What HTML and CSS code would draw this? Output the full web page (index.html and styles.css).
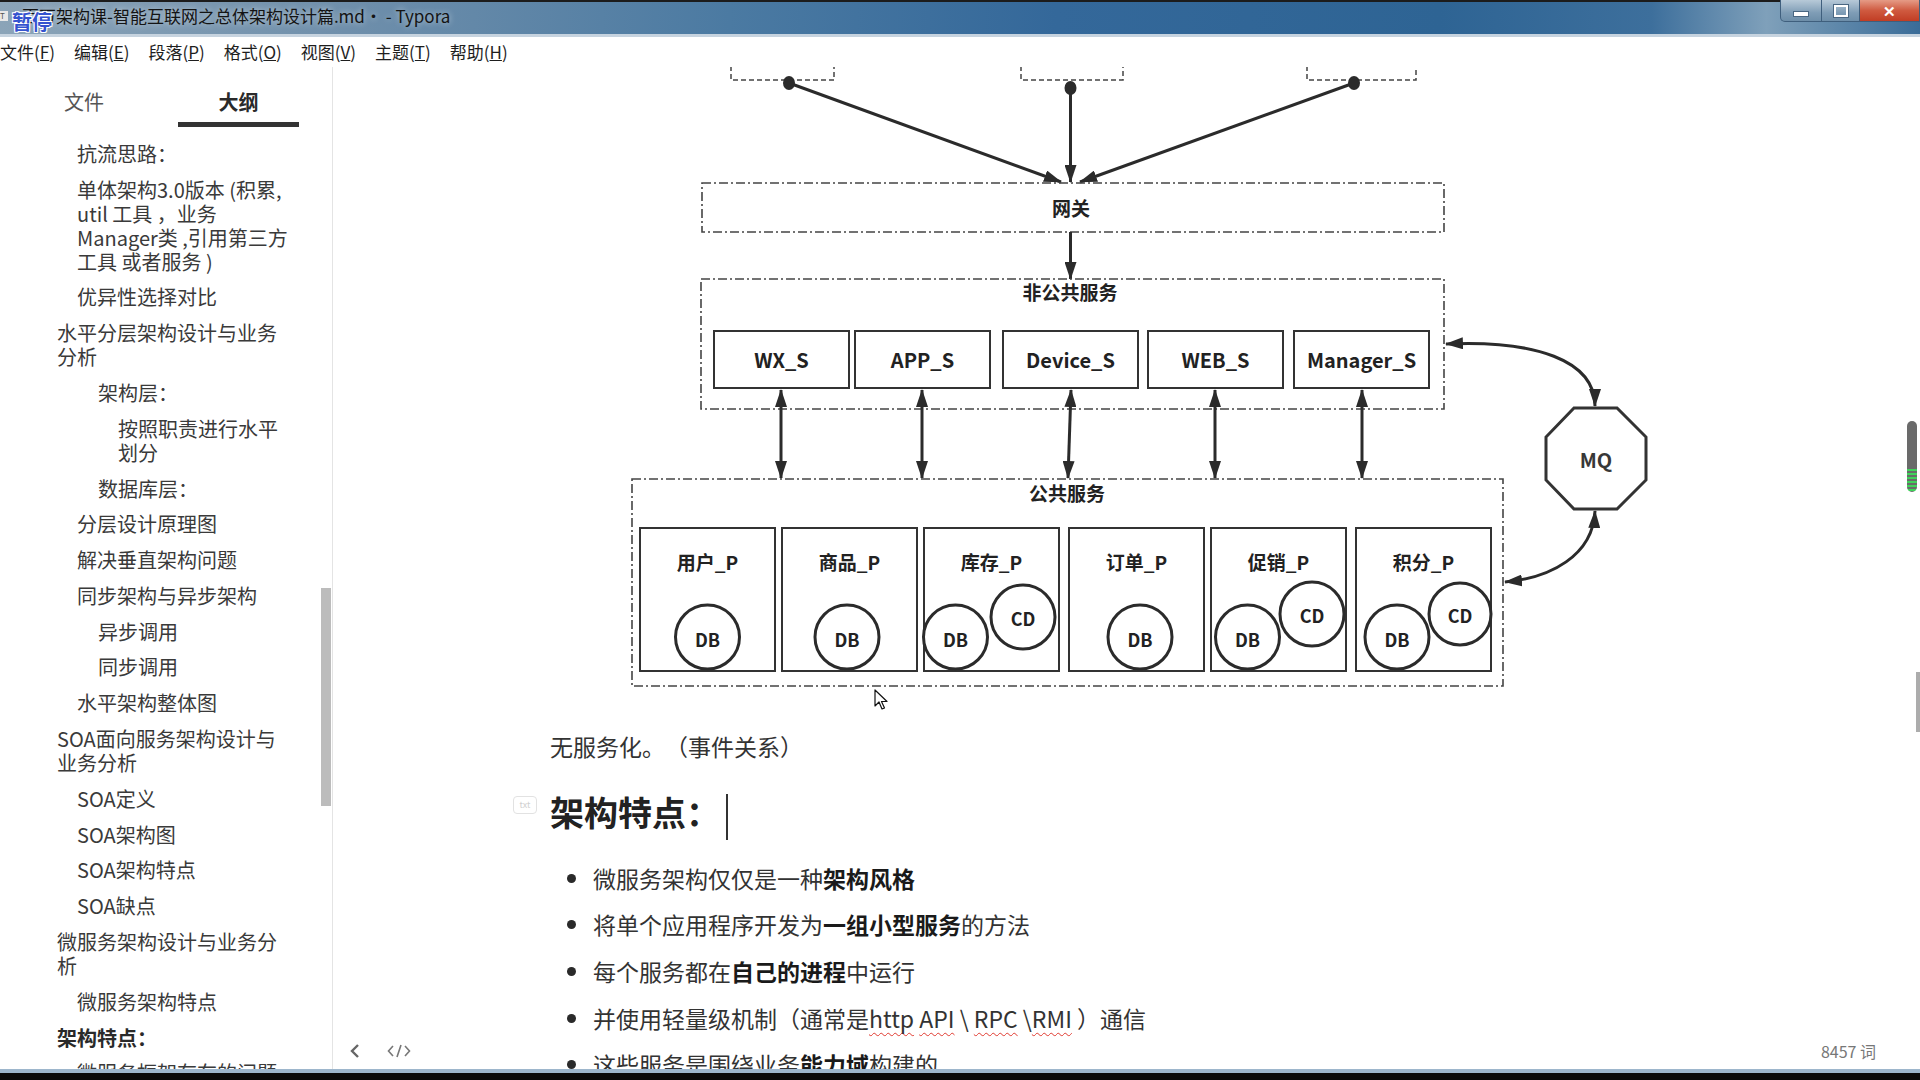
FILE: index.html
```html
<!DOCTYPE html>
<html lang="zh-CN">
<head>
  <meta charset="UTF-8">
  <meta name="viewport" content="width=device-width, initial-scale=1.0">
  <title>Typora</title>
  <link rel="stylesheet" href="styles.css">
</head>
<body>
<div class="window">
  <div class="titlebar">
    <span class="app-icon">T</span>
    <span class="title">百万架构课-智能互联网之总体架构设计篇.md• - Typora</span>
    <span class="paused">暂停</span>
    <div class="win-btns">
      <span class="wb min"><i></i></span>
      <span class="wb max"><i></i></span>
      <span class="wb close">✕</span>
    </div>
  </div>

  <div class="menubar">
    <span>文件(<u>F</u>)</span>
    <span>编辑(<u>E</u>)</span>
    <span>段落(<u>P</u>)</span>
    <span>格式(<u>O</u>)</span>
    <span>视图(<u>V</u>)</span>
    <span>主题(<u>T</u>)</span>
    <span>帮助(<u>H</u>)</span>
  </div>

  <div class="main">
    <aside class="sidebar">
      <div class="tabs">
        <div class="tab files">文件</div>
        <div class="tab active">大纲</div>
      </div>
      <div class="outline">
        <div class="o-item lv2">抗流思路：</div>
        <div class="o-item lv2">单体架构3.0版本 (积累,<br>util 工具 ，业务<br>Manager类 ,引用第三方<br>工具 或者服务 )</div>
        <div class="o-item lv2">优异性选择对比</div>
        <div class="o-item lv1">水平分层架构设计与业务<br>分析</div>
        <div class="o-item lv3">架构层：</div>
        <div class="o-item lv4">按照职责进行水平<br>划分</div>
        <div class="o-item lv3">数据库层：</div>
        <div class="o-item lv2">分层设计原理图</div>
        <div class="o-item lv2">解决垂直架构问题</div>
        <div class="o-item lv2">同步架构与异步架构</div>
        <div class="o-item lv3">异步调用</div>
        <div class="o-item lv3">同步调用</div>
        <div class="o-item lv2">水平架构整体图</div>
        <div class="o-item lv1">SOA面向服务架构设计与<br>业务分析</div>
        <div class="o-item lv2">SOA定义</div>
        <div class="o-item lv2">SOA架构图</div>
        <div class="o-item lv2">SOA架构特点</div>
        <div class="o-item lv2">SOA缺点</div>
        <div class="o-item lv1">微服务架构设计与业务分<br>析</div>
        <div class="o-item lv2">微服务架构特点</div>
        <div class="o-item lv1 current">架构特点：</div>
        <div class="o-item lv2">微服务框架存在的问题</div>
      </div>
      <div class="side-scroll"></div>
    </aside>

    <section class="editor">
      <div class="doc">
        <svg class="diagram" viewBox="550 67 1120 625" width="1120" height="625">
          <defs>
            <marker id="ah" viewBox="0 0 18 12" refX="17" refY="6" markerWidth="18" markerHeight="12" markerUnits="userSpaceOnUse" orient="auto-start-reverse">
              <path d="M0,0 L18,6 L0,12 z" fill="#2b2b2b"/>
            </marker>
          </defs>

          <!-- clients -->
          <path class="dash" d="M731,58 V80 H834 V58"/>
          <path class="dash" d="M1021,58 V80 H1123 V58"/>
          <path class="dash" d="M1307,58 V80 H1416 V58"/>
          <line class="arrow" x1="789" y1="83" x2="1061" y2="182" marker-end="url(#ah)"/>
          <line class="arrow" x1="1070.5" y1="88" x2="1070.5" y2="182" marker-end="url(#ah)"/>
          <line class="arrow" x1="1354" y1="83" x2="1080" y2="182" marker-end="url(#ah)"/>
          <ellipse class="dot" cx="789" cy="83" rx="6" ry="7"/>
          <ellipse class="dot" cx="1070.5" cy="88" rx="6" ry="7"/>
          <ellipse class="dot" cx="1354" cy="83" rx="6" ry="7"/>

          <!-- gateway -->
          <rect class="zone" x="702" y="183" width="742" height="49"/>
          <text class="lbl" x="1071" y="207">网关</text>
          <line class="arrow" x1="1070.5" y1="232" x2="1070.5" y2="279" marker-end="url(#ah)"/>

          <!-- private services -->
          <rect class="zone" x="701" y="279" width="743" height="130"/>
          <text class="lbl" x="1070" y="291">非公共服务</text>
          <rect class="box" x="714" y="331" width="135" height="57"/>
          <rect class="box" x="855" y="331" width="135" height="57"/>
          <rect class="box" x="1003" y="331" width="135" height="57"/>
          <rect class="box" x="1148" y="331" width="135" height="57"/>
          <rect class="box" x="1294" y="331" width="135" height="57"/>
          <text class="lbl big" x="781.5" y="359">WX_S</text>
          <text class="lbl big" x="922.5" y="359">APP_S</text>
          <text class="lbl big" x="1070.5" y="359">Device_S</text>
          <text class="lbl big" x="1215.5" y="359">WEB_S</text>
          <text class="lbl big" x="1361.5" y="359">Manager_S</text>

          <line class="arrow" x1="781" y1="390" x2="781" y2="478" marker-start="url(#ah)" marker-end="url(#ah)"/>
          <line class="arrow" x1="922" y1="390" x2="922" y2="478" marker-start="url(#ah)" marker-end="url(#ah)"/>
          <line class="arrow" x1="1071" y1="390" x2="1068" y2="478" marker-start="url(#ah)" marker-end="url(#ah)"/>
          <line class="arrow" x1="1215" y1="390" x2="1215" y2="478" marker-start="url(#ah)" marker-end="url(#ah)"/>
          <line class="arrow" x1="1362" y1="390" x2="1362" y2="478" marker-start="url(#ah)" marker-end="url(#ah)"/>

          <!-- public services -->
          <rect class="zone" x="632" y="479" width="871" height="207"/>
          <text class="lbl" x="1067" y="492">公共服务</text>
          <rect class="box" x="640" y="528" width="135" height="143"/>
          <rect class="box" x="782" y="528" width="135" height="143"/>
          <rect class="box" x="924" y="528" width="135" height="143"/>
          <rect class="box" x="1069" y="528" width="135" height="143"/>
          <rect class="box" x="1211" y="528" width="135" height="143"/>
          <rect class="box" x="1356" y="528" width="135" height="143"/>
          <text class="lbl" x="707.5" y="561">用户_P</text>
          <text class="lbl" x="849.5" y="561">商品_P</text>
          <text class="lbl" x="991.5" y="561">库存_P</text>
          <text class="lbl" x="1136.5" y="561">订单_P</text>
          <text class="lbl" x="1278.5" y="561">促销_P</text>
          <text class="lbl" x="1423.5" y="561">积分_P</text>

          <circle class="store" cx="707.5" cy="637" r="32"/>
          <text class="lbl db" x="707.5" y="639">DB</text>
          <circle class="store" cx="847" cy="637" r="32"/>
          <text class="lbl db" x="847" y="639">DB</text>
          <circle class="store" cx="955.5" cy="637" r="32"/>
          <text class="lbl db" x="955.5" y="639">DB</text>
          <circle class="store" cx="1023" cy="617" r="32"/>
          <text class="lbl db" x="1023" y="618">CD</text>
          <circle class="store" cx="1140" cy="637" r="32"/>
          <text class="lbl db" x="1140" y="639">DB</text>
          <circle class="store" cx="1247.5" cy="637" r="32"/>
          <text class="lbl db" x="1247.5" y="639">DB</text>
          <circle class="store" cx="1312" cy="614" r="32"/>
          <text class="lbl db" x="1312" y="615">CD</text>
          <circle class="store" cx="1397" cy="637" r="32"/>
          <text class="lbl db" x="1397" y="639">DB</text>
          <circle class="store" cx="1460" cy="614" r="31"/>
          <text class="lbl db" x="1460" y="615">CD</text>

          <!-- message queue -->
          <polygon class="box thick" points="1574,408 1617,408 1646,437 1646,480 1617,509 1574,509 1546,480 1546,437"/>
          <text class="lbl mq" x="1596" y="459">MQ</text>
          <path class="arrow" d="M1446,344 C1535,340 1595,360 1595,406" marker-start="url(#ah)" marker-end="url(#ah)"/>
          <path class="arrow" d="M1595,511 C1593,556 1550,578 1505,582" marker-start="url(#ah)" marker-end="url(#ah)"/>
        </svg>

        <p class="note">无服务化。（事件关系）</p>

        <h2><span class="h-mark">txt</span>架构特点：<span class="caret"></span></h2>

        <ul class="points">
          <li>微服务架构仅仅是一种<strong>架构风格</strong></li>
          <li>将单个应用程序开发为<strong>一组小型服务</strong>的方法</li>
          <li>每个服务都在<strong>自己的进程</strong>中运行</li>
          <li>并使用轻量级机制（通常是<span class="typo">http</span> <span class="typo">API</span> \ <span class="typo">RPC</span> \<span class="typo">RMI</span> ）通信</li>
          <li>这些服务是围绕业务<strong>能力域</strong>构建的</li>
        </ul>
      </div>

      <svg class="pointer" width="14" height="22" viewBox="0 0 14 22">
        <path d="M1,1 L1,17 L5,13 L8,20 L10.5,19 L7.5,12.5 L13,12.5 Z" fill="#fff" stroke="#111" stroke-width="1.2" stroke-linejoin="round"/>
      </svg>

      <div class="volume"></div>
      <div class="edit-scroll"></div>

      <div class="footer">
        <svg class="f-icon" width="12" height="16" viewBox="0 0 12 16">
          <path d="M9,2 L3,8 L9,14" fill="none" stroke="#666" stroke-width="2.4"/>
        </svg>
        <svg class="f-icon code" width="24" height="16" viewBox="0 0 24 16">
          <path d="M6,3 L1.5,8 L6,13 M18,3 L22.5,8 L18,13 M14,2 L10,14" fill="none" stroke="#777" stroke-width="1.6"/>
        </svg>
        <span class="words">8457 词</span>
      </div>
    </section>
  </div>

  <div class="taskbar"></div>
</div>
</body>
</html>
```

FILE: styles.css
```css
body {
  margin: 0;
  width: 1920px;
  height: 1080px;
  overflow: hidden;
  background: #000;
  font-family: "Noto Sans CJK SC", "Noto Sans", sans-serif;
  text-spacing-trim: space-all;
}
.window {
  height: 1080px;
  display: flex;
  flex-direction: column;
  background: #fff;
}

/* title bar */
.titlebar {
  flex: none;
  height: 37px;
  box-sizing: border-box;
  border-top: 2px solid #1c1c1c;
  border-bottom: 3px solid #c6d3df;
  display: flex;
  align-items: center;
  position: relative;
  background: linear-gradient(90deg, #8ba4b8 0%, #6f8fab 18%, #4b7aa2 38%, #34689a 55%, #2e6494 75%, #3d6f9c 86%, #7fa0ba 92%, #5c86a9 96%, #3a6c98 100%);
}
.app-icon {
  position: absolute;
  left: 0;
  top: 9px;
  width: 8px;
  height: 10px;
  font-size: 8px;
  line-height: 10px;
  color: #555;
  background: #e8e8e8;
}
.title {
  margin-left: 22px;
  margin-top: -4px;
  font-size: 17px;
  line-height: 24px;
  color: #141414;
  text-shadow: 0 0 6px rgba(255, 255, 255, 0.6);
  white-space: nowrap;
}
.paused {
  position: absolute;
  left: 12px;
  top: 7px;
  font-size: 20px;
  line-height: 26px;
  font-weight: bold;
  color: #3453cf;
  text-shadow: -1px -1px 0 #fff, 1px -1px 0 #fff, -1px 1px 0 #fff, 1px 1px 0 #fff;
}
.win-btns {
  margin-left: auto;
  align-self: flex-start;
  margin-top: -2px;
  display: flex;
}
.wb {
  height: 22px;
  box-sizing: border-box;
  border: 1px solid #3f5f7d;
  border-top: none;
  display: flex;
  align-items: center;
  justify-content: center;
  background: linear-gradient(#b7c9d8, #7f9db6 60%, #6d8ea9);
}
.wb.min {
  width: 42px;
  border-bottom-left-radius: 5px;
}
.wb.min i {
  width: 14px;
  height: 4px;
  margin-top: 6px;
  background: #fff;
  border: 1px solid #4a6782;
}
.wb.max {
  width: 38px;
  border-left: none;
}
.wb.max i {
  width: 10px;
  height: 8px;
  border: 2px solid #fff;
  outline: 1px solid #4a6782;
}
.wb.close {
  width: 60px;
  border-left: none;
  color: #fff;
  font-size: 15px;
  font-weight: bold;
  background: linear-gradient(#e59b86, #cf5a40 50%, #c13d24);
}

/* menu */
.menubar {
  flex: none;
  height: 30px;
  display: flex;
  gap: 19px;
  font-size: 17px;
  line-height: 30px;
  color: #1e1e1e;
  white-space: nowrap;
}

/* main area */
.main {
  flex: 1;
  display: flex;
  min-height: 0;
}
.sidebar {
  flex: none;
  width: 332px;
  border-right: 1px solid #e4e4e4;
  position: relative;
  overflow: hidden;
}
.tabs {
  display: flex;
  padding-top: 19px;
}
.tab {
  font-size: 20px;
  line-height: 32px;
  text-align: center;
  color: #555;
  padding-bottom: 4px;
  border-bottom: 5px solid transparent;
}
.tab.files {
  width: 168px;
}
.tab.active {
  width: 121px;
  margin-left: 10px;
  color: #2a2a2a;
  font-weight: bold;
  border-bottom-color: #333;
}
.outline {
  padding-top: 9px;
}
.o-item {
  font-size: 20px;
  line-height: 24px;
  padding: 5.9px 0;
  color: #3a3a3a;
  white-space: nowrap;
}
.lv1 { padding-left: 57px; }
.lv2 { padding-left: 77px; }
.lv3 { padding-left: 98px; }
.lv4 { padding-left: 118px; }
.o-item.current {
  font-weight: bold;
  color: #2a2a2a;
}
.side-scroll {
  position: absolute;
  left: 321px;
  top: 521px;
  width: 10px;
  height: 218px;
  background: #bcbcbc;
}

/* editor */
.editor {
  flex: 1;
  position: relative;
  overflow: hidden;
}
.doc {
  padding-left: 217px;
  color: #333;
}
.diagram {
  display: block;
}
.diagram .dash {
  fill: none;
  stroke: #444;
  stroke-width: 1.5;
  stroke-dasharray: 5 3;
}
.diagram .zone {
  fill: none;
  stroke: #444;
  stroke-width: 1.6;
  stroke-dasharray: 9 3 2 3;
}
.diagram .box {
  fill: #fff;
  stroke: #333;
  stroke-width: 2;
}
.diagram .box.thick {
  stroke-width: 3;
}
.diagram .store {
  fill: #fff;
  stroke: #2b2b2b;
  stroke-width: 3;
}
.diagram .arrow {
  fill: none;
  stroke: #2b2b2b;
  stroke-width: 3;
}
.diagram .dot {
  fill: #2b2b2b;
}
.diagram .lbl {
  font-family: "Noto Sans CJK SC", "Noto Sans", sans-serif;
  font-size: 19px;
  font-weight: bold;
  fill: #222;
  text-anchor: middle;
  dominant-baseline: central;
}
.diagram .lbl.big {
  font-size: 20px;
}
.diagram .lbl.db {
  font-size: 18px;
}
.diagram .lbl.mq {
  font-size: 20px;
  fill: #383838;
}

.note {
  margin: 36px 0 0;
  font-size: 23px;
  line-height: 36px;
}
h2 {
  position: relative;
  margin: 24px 0 0;
  font-size: 34px;
  line-height: 48px;
  font-weight: bold;
  color: #222;
}
.h-mark {
  position: absolute;
  left: -37px;
  top: 8px;
  width: 24px;
  height: 18px;
  box-sizing: border-box;
  border: 1.5px solid #e2e2e2;
  border-radius: 4px;
  font-size: 9px;
  line-height: 15px;
  text-align: center;
  font-weight: normal;
  color: #d0d0d0;
}
.caret {
  display: inline-block;
  width: 2px;
  height: 46px;
  margin-left: 6px;
  vertical-align: middle;
  background: #333;
}
.points {
  list-style: none;
  margin: 20px 0 0;
  padding-left: 43px;
}
.points li {
  position: relative;
  font-size: 23px;
  line-height: 36px;
  margin-bottom: 10.6px;
  white-space: nowrap;
}
.points li::before {
  content: "";
  position: absolute;
  left: -26px;
  top: 14px;
  width: 9px;
  height: 9px;
  border-radius: 50%;
  background: #2a2a2a;
}
.points strong {
  color: #1a1a1a;
}
.typo {
  text-decoration: underline wavy #e03a30;
  text-decoration-thickness: 1px;
  text-underline-offset: 4px;
  text-decoration-skip-ink: none;
}

.pointer {
  position: absolute;
  left: 541px;
  top: 622px;
}
.volume {
  position: absolute;
  left: 1574px;
  top: 354px;
  width: 10px;
  height: 71px;
  border-radius: 5px;
  background: linear-gradient(#6a6a6a 0 68%, transparent 68%),
    repeating-linear-gradient(#3fd25a 0 2px, #6a6a6a 2px 4px);
}
.edit-scroll {
  position: absolute;
  right: 0;
  top: 605px;
  width: 4px;
  height: 60px;
  background: #acacac;
}
.footer {
  position: absolute;
  left: 0;
  right: 0;
  bottom: 0;
  height: 36px;
  display: flex;
  align-items: center;
  padding: 0 44px 0 16px;
  gap: 26px;
}
.words {
  margin-left: auto;
  font-size: 16px;
  color: #777;
}

.taskbar {
  flex: none;
  height: 11px;
  box-sizing: border-box;
  border-top: 4px solid #9db6cc;
  background: #0a0a0a;
}
```
